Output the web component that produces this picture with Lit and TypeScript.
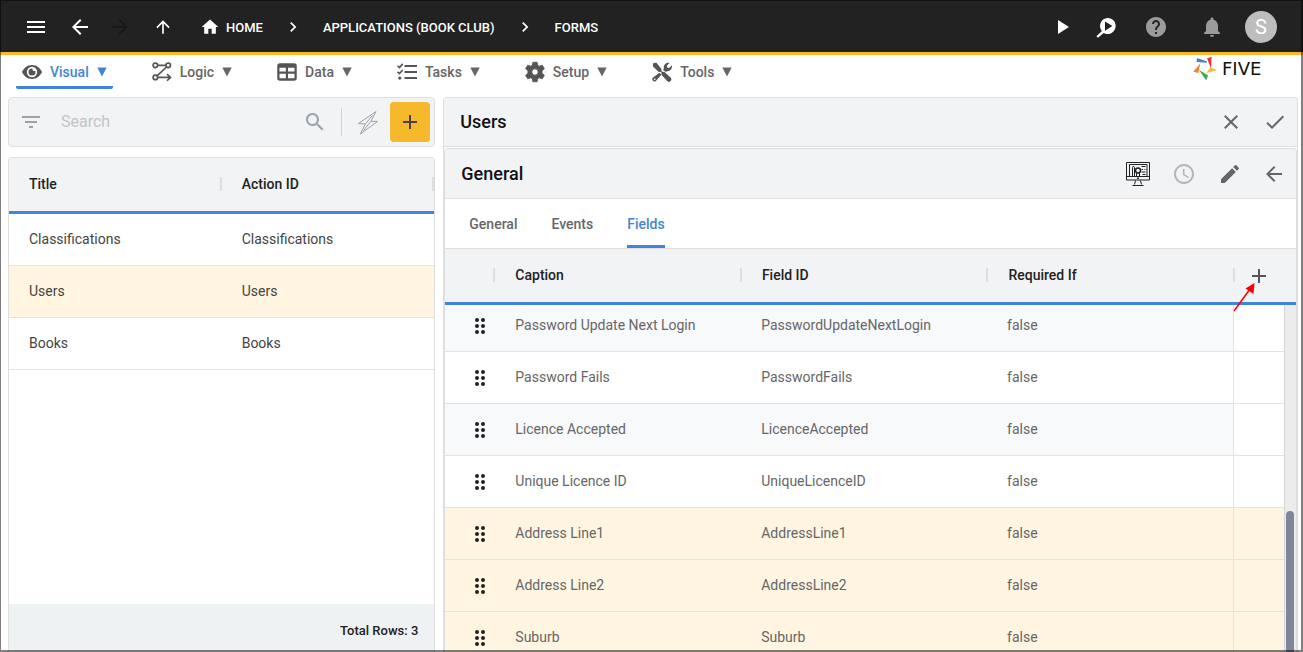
import { LitElement, html, css, svg } from "lit";
import { customElement, property, state } from "lit/decorators.js";
import { classMap } from "lit/directives/class-map.js";

const icons = {
  menu: svg`<path d="M3 18h18v-2H3v2zm0-5h18v-2H3v2zm0-7v2h18V6H3z"/>`,
  back: svg`<path d="M20 11H7.83l5.59-5.59L12 4l-8 8 8 8 1.41-1.41L7.83 13H20v-2z"/>`,
  forward: svg`<path d="M12 4l-1.41 1.41L16.17 11H4v2h12.17l-5.58 5.59L12 20l8-8z"/>`,
  up: svg`<path d="M4 12l1.41 1.41L11 7.83V20h2V7.83l5.58 5.59L20 12l-8-8-8 8z"/>`,
  home: svg`<path d="M10 20v-6h4v6h5v-8h3L12 3 2 12h3v8z"/>`,
  chevron: svg`<path d="M10 6 8.59 7.41 13.17 12l-4.58 4.59L10 18l6-6z"/>`,
  play: svg`<path d="M8 5v14l11-7z"/>`,
  inspect: svg`<path fill-rule="evenodd" d="M13.600 3a8 8 0 1 1-4 14.900L4 22.800l-1.600-1.600 5.500-5.100A8 8 0 0 1 13.600 3zM11 6.400v9.400l7.400-4.700z"/>`,
  help: svg`<path d="M12 2C6.48 2 2 6.48 2 12s4.48 10 10 10 10-4.48 10-10S17.52 2 12 2zm1 17h-2v-2h2v2zm2.07-7.75-.9.92C13.45 12.9 13 13.5 13 15h-2v-.5c0-1.1.45-2.1 1.17-2.83l1.24-1.26c.37-.36.59-.86.59-1.41 0-1.1-.9-2-2-2s-2 .9-2 2H8c0-2.21 1.79-4 4-4s4 1.79 4 4c0 .88-.36 1.68-.93 2.25z"/>`,
  bell: svg`<path d="M12 22c1.1 0 2-.9 2-2h-4c0 1.1.89 2 2 2zm6-6v-5c0-3.07-1.64-5.64-4.5-6.32V4c0-.83-.67-1.5-1.5-1.5s-1.5.67-1.5 1.5v.68C7.63 5.36 6 7.92 6 11v5l-2 2v1h16v-1l-2-2z"/>`,
  eye: svg`<path fill-rule="evenodd" d="M12 3.600C6.600 3.600 2.200 7 0 12c2.200 5 6.600 8.400 12 8.400S21.800 17 24 12C21.800 7 17.400 3.600 12 3.600zM12 18.200A6.200 6.200 0 1 1 12 5.800a6.200 6.200 0 0 1 0 12.400z"/><path d="M12 7.800a4.200 4.200 0 1 0 4.200 4.200c0-.6-.1-1.100-.3-1.600a2.100 2.100 0 0 1-3.400-1.300c0-.4.100-.8.300-1.200z"/>`,
  logic: svg`<g fill="none" stroke="currentColor" stroke-width="2"><circle cx="4" cy="4" r="2.700"/><circle cx="19.500" cy="4" r="2.700"/><circle cx="4" cy="18.500" r="2.700"/><path d="M6.700 4h10.100M17.500 6 6 16.700M6.700 18.500H22M18 14.500 22.200 18.500 18 22.500"/></g>`,
  data: svg`<path fill-rule="evenodd" d="M3.500 1.500h17A3.200 3.200 0 0 1 23.700 4.700v14.600a3.200 3.200 0 0 1-3.200 3.200h-17A3.200 3.200 0 0 1 .300 19.300V4.700A3.200 3.200 0 0 1 3.500 1.500zM3 7v4.500h7.600V7zM13.200 7v4.500H21V7zM3 14.200v5.200h7.600v-5.200zM13.200 14.200v5.200H21v-5.200z"/>`,
  tasks: svg`<path d="M9 3.500h15V6H9zM9 10.700h15v2.500H9zM9 18h15v2.500H9z"/><circle cx="3.300" cy="19.300" r="2"/><path d="m.700 4.500 2.200 2.200 4-4.400M.700 11.800 2.900 14l4-4.400" fill="none" stroke="currentColor" stroke-width="2"/>`,
  gear: svg`<path fill-rule="evenodd" d="M9.500.300h5l.7 3.600 2 1.100 3.500-1.200 2.600 4.200-2.800 2.400v3.200l2.800 2.400-2.600 4.200-3.500-1.200-2 1.100-.7 3.600h-5l-.7-3.600-2-1.100-3.500 1.200L.7 16l2.800-2.400v-3.200L.7 8l2.600-4.200L6.800 5l2-1.100zM12 8.200a3.800 3.800 0 1 0 0 7.600 3.800 3.800 0 0 0 0-7.600z" stroke="currentColor" stroke-width="1" stroke-linejoin="round"/>`,
  tools: svg`<path fill-rule="evenodd" d="M1.500 1.200 5.300 1l6.200 7.500-.3 2 1.500 1.500 2-.3 8 7.300a3 3 0 0 1-4.200 4.200l-7.200-7.800.3-2.200-1.500-1.500-2.100.2L1 5z"/><path fill-rule="evenodd" d="M21 1.200 17.800 4.500l.5 2.200 2.200.5 3.200-3.200c1 3.600-1.500 7.500-5.700 7.200L16.600 12l-3.200-2.400.8-1.800C13.500 3.500 17 .1 21 1.200zM9 13l2.200 2.200-6.500 7.500a2.700 2.700 0 0 1-3.800-3.800zM3.300 19.800a1 1 0 1 0 0 2 1 1 0 0 0 0-2z"/>`,
  filter: svg`<path d="M10 18h4v-2h-4v2zM3 6v2h18V6H3zm3 7h12v-2H6v2z"/>`,
  search: svg`<path d="M15.500 14h-.79l-.28-.27C15.410 12.590 16 11.110 16 9.500 16 5.910 13.090 3 9.500 3S3 5.910 3 9.500 5.910 16 9.500 16c1.610 0 3.090-.59 4.230-1.570l.27.28v.79l5 4.990L20.490 19l-4.990-5zm-6 0C7.010 14 5 11.990 5 9.500S7.010 5 9.500 5 14 7.010 14 9.500 11.990 14 9.500 14z"/>`,
  bolt: svg`<path d="M20 1.500 2.500 13.500l6.800.5-5 10L21.500 11.500l-6.500-.3zM16.500 5.500 9.300 14M15 11.200 7.500 20.500" fill="none" stroke="currentColor" stroke-width="1"/>`,
  plus: svg`<path d="M19 13h-6v6h-2v-6H5v-2h6V5h2v6h6v2z"/>`,
  close: svg`<path d="M19 6.410 17.590 5 12 10.590 6.410 5 5 6.410 10.590 12 5 17.590 6.410 19 12 13.410 17.590 19 19 17.590 13.410 12z"/>`,
  check: svg`<path d="M9 16.170 4.830 12l-1.420 1.410L9 19 21 7l-1.410-1.410z"/>`,
  clock: svg`<path d="M11.990 2C6.470 2 2 6.480 2 12s4.470 10 9.990 10C17.520 22 22 17.520 22 12S17.520 2 11.990 2zM12 20c-4.420 0-8-3.580-8-8s3.580-8 8-8 8 3.580 8 8-3.580 8-8 8zm.5-13H11v6l5.250 3.150.75-1.230-4.500-2.670z"/>`,
  pencil: svg`<path d="M3 17.250V21h3.750L17.810 9.940l-3.750-3.750L3 17.250zM20.710 7.040c.39-.39.39-1.020 0-1.410l-2.340-2.340a.996.996 0 0 0-1.410 0l-1.830 1.830 3.750 3.750 1.830-1.830z"/>`,
  monitor: svg`<g fill="none" stroke="currentColor"><path d="M.5.500h23v17.500H.5zM.5 14.500h23M3.500 2.500h17.500v12H3.500zM9.500 18.500l-1 4M14.500 18.500l1 4M6.500 23.500h11" stroke-width="1"/><path d="M6.500 14V5.500L7.500 4l1 1.500V14M10.500 14v-3M13.500 14v-3M15.500 4.500h4M15.500 7.500h1.500M18.500 7.500h1M15.500 10h4M16.500 12.500h3" stroke-width="1"/><circle cx="12" cy="8.500" r="2.500" stroke-width="1.500"/></g><circle cx="12" cy="16.300" r="1"/>`,
  drag: svg`<circle cx="9" cy="6" r="2"/><circle cx="15" cy="6" r="2"/><circle cx="9" cy="12" r="2"/><circle cx="15" cy="12" r="2"/><circle cx="9" cy="18" r="2"/><circle cx="15" cy="18" r="2"/>`,
};

type IconName = keyof typeof icons;

@customElement("ui-icon")
class UiIcon extends LitElement {
  @property() name: IconName = "menu";

  static styles = css`
    :host { display: inline-flex; width: 24px; height: 24px; flex: none; }
    svg { width: 100%; height: 100%; fill: currentColor; overflow: visible; }
  `;

  render() {
    return html`<svg viewBox="0 0 24 24" aria-hidden="true">${icons[this.name]}</svg>`;
  }
}

const base = css`
  * { box-sizing: border-box; }
  button { font: inherit; color: inherit; background: none; border: 0; padding: 0; margin: 0; cursor: pointer; display: inline-flex; align-items: center; justify-content: center; }
  a { color: inherit; text-decoration: none; }
`;

@customElement("app-header")
class AppHeader extends LitElement {
  static styles = [base, css`
    :host { display: flex; align-items: center; height: 55px; padding: 2px 26px 0 14px; background: #222; border-bottom: 3px solid #fbb829; color: #fff; }
    .nav { width: 44px; height: 44px; }
    .nav.off { color: #181818; width: 36px; }
    .nav.up { width: 50px; }
    .small { width: 20px; height: 20px; }
    .crumbs { display: flex; align-items: center; margin: 0 0 0 12px; padding: 0; list-style: none; font-size: 13px; line-height: 20px; font-weight: 500; }
    .crumbs li, .crumbs a { display: flex; align-items: center; }
    .crumbs a { gap: 6px; }
    .crumbs span { padding-top: 1px; }
    .sep { width: 20px; height: 20px; margin: 0 20px; }
    .right { display: flex; align-items: center; margin-left: auto; }
    .right button { width: 44px; height: 44px; }
    .right .help { width: 56px; color: #9b9b9b; }
    .right .bell { width: 56px; color: #9b9b9b; }
    .avatar { width: 32px; height: 32px; margin-left: 5px; border-radius: 50%; background: #bdbdbd; display: grid; place-items: center; font-size: 20px; line-height: 32px; }
  `];

  render() {
    return html`
      <button class="nav" aria-label="Menu"><ui-icon name="menu"></ui-icon></button>
      <button class="nav" aria-label="Back"><ui-icon name="back"></ui-icon></button>
      <button class="nav off" aria-label="Forward" disabled><ui-icon name="forward"></ui-icon></button>
      <button class="nav up" aria-label="Up"><ui-icon class="small" name="up"></ui-icon></button>
      <ol class="crumbs">
        <li><a href="#home"><ui-icon class="small" name="home"></ui-icon><span>HOME</span></a></li>
        <li><ui-icon class="sep" name="chevron"></ui-icon><a href="#applications"><span>APPLICATIONS (BOOK CLUB)</span></a></li>
        <li><ui-icon class="sep" name="chevron"></ui-icon><a href="#forms"><span>FORMS</span></a></li>
      </ol>
      <div class="right">
        <button aria-label="Run"><ui-icon name="play"></ui-icon></button>
        <button aria-label="Inspect"><ui-icon name="inspect"></ui-icon></button>
        <button class="help" aria-label="Help"><ui-icon name="help"></ui-icon></button>
        <button class="bell" aria-label="Notifications"><ui-icon name="bell"></ui-icon></button>
        <span class="avatar">S</span>
      </div>
    `;
  }
}

const sections: { label: string; icon: IconName }[] = [
  { label: "Visual", icon: "eye" },
  { label: "Logic", icon: "logic" },
  { label: "Data", icon: "data" },
  { label: "Tasks", icon: "tasks" },
  { label: "Setup", icon: "gear" },
  { label: "Tools", icon: "tools" },
];

@customElement("section-menu")
class SectionMenu extends LitElement {
  @state() current = "Visual";

  static styles = [base, css`
    :host { display: flex; align-items: flex-start; height: 42px; padding: 0 22px 0 16px; background: #fff; }
    nav { display: flex; gap: 33px; }
    .item { height: 34px; padding: 2px 6px 0; gap: 8px; border-bottom: 3px solid transparent; border-radius: 2px; color: #666; font-size: 14px; line-height: 20px; font-weight: 500; }
    .item.active { color: #4285d8; border-color: #4285d8; }
    .icon { width: 20px; height: 20px; color: #555; }
    .caret { width: 10px; height: 10px; fill: currentColor; }
    .brand { display: flex; align-items: center; gap: 5px; margin-left: auto; height: 28px; color: #111; }
    .brand svg { width: 24px; height: 24px; }
    .brand span { width: 59px; font: 18px/24px "DejaVu Sans", sans-serif; }
  `];

  render() {
    return html`
      <nav>
        ${sections.map(s => html`
          <button class=${classMap({ item: true, active: s.label === this.current })} @click=${() => (this.current = s.label)}>
            <ui-icon class="icon" name=${s.icon}></ui-icon>
            <span>${s.label}</span>
            <svg class="caret" viewBox="0 0 10 10"><path d="M.300.500h9.400L5 9.500z"/></svg>
          </button>`)}
      </nav>
      <a class="brand" href="#five" aria-label="Five">
        <svg viewBox="0 0 24 24">
          <path d="M4 1 13.800 4.300v1.500L3.500 5z" fill="#4285d8"/>
          <path d="M14 1.200 18.700 0 18 11.500z" fill="#e5393b"/>
          <path d="M7.300 6.200 5.300 16 .300 14.700z" fill="#f58233"/>
          <path d="M6 13 15 18.300 13.300 23.500z" fill="#3fa757"/>
          <path d="M13.500 16 17.500 10.500 24 13.300z" fill="#fbb829"/>
        </svg>
        <span>FIVE</span>
      </a>
    `;
  }
}

const tableStyles = css`
  table { display: block; font-size: 14px; line-height: 20px; }
  thead, tbody { display: block; }
  tr { display: grid; }
  th, td { padding: 0 0 2px 20px; text-align: left; display: flex; align-items: center; min-width: 0; }
  thead tr { height: 56px; background: #f1f3f5; border-bottom: 3px solid #4285d8; }
  th { font-weight: 500; color: #222; border-right: 2px solid #dcdee0; border-image: linear-gradient(transparent 19px, #dcdee0 19px, #dcdee0 33px, transparent 33px) 0 2 0 0; }
  tbody tr { height: 52px; border-bottom: 1px solid #e3e3e3; }
`;

@customElement("record-list")
class RecordList extends LitElement {
  @property({ attribute: false }) rows = ["Classifications", "Users", "Books"];
  @state() selected = "Users";

  static styles = [base, tableStyles, css`
    :host { display: flex; flex-direction: column; gap: 10px; min-height: 0; }
    .search { display: flex; align-items: center; height: 50px; padding: 0 4px 0 10px; border: 1px solid #dedede; border-radius: 4px; background: #f1f3f5; color: #9aa2aa; }
    input { flex: 1; min-width: 0; margin-left: 18px; padding: 0; border: 0; outline: 0; background: none; font: 16px/24px Roboto, sans-serif; color: #222; }
    input::placeholder { color: #c2c5c8; opacity: 1; }
    .bar { width: 1px; height: 28px; margin-left: 14px; background: #d0d3d6; }
    .bolt { width: 48px; height: 40px; padding-left: 4px; }
    .add { width: 40px; height: 40px; border-radius: 4px; background: #f8b82c; color: #444; }
    .panel { flex: 1; min-height: 0; display: flex; flex-direction: column; border: 1px solid #dedede; border-bottom: 0; border-radius: 4px 4px 0 0; overflow: hidden; background: #fff; }
    tr { grid-template-columns: 1fr 1fr; }
    td { color: #444; }
    tr.selected { background: #fff5e1; }
    footer { margin-top: auto; height: 48px; padding: 17px 16px 0; background: #eef2f3; text-align: right; font-size: 13px; line-height: 20px; font-weight: 500; color: #222; }
  `];

  render() {
    return html`
      <form class="search" role="search" @submit=${(e: Event) => e.preventDefault()}>
        <button type="button" aria-label="Filter"><ui-icon name="filter"></ui-icon></button>
        <input type="text" placeholder="Search" aria-label="Search">
        <button aria-label="Search"><ui-icon name="search"></ui-icon></button>
        <span class="bar"></span>
        <button type="button" class="bolt" aria-label="Quick action"><ui-icon name="bolt"></ui-icon></button>
        <button type="button" class="add" aria-label="Add"><ui-icon name="plus"></ui-icon></button>
      </form>
      <div class="panel">
        <table>
          <thead><tr><th>Title</th><th>Action ID</th></tr></thead>
          <tbody>
            ${this.rows.map(r => html`
              <tr class=${classMap({ selected: r === this.selected })} @click=${() => (this.selected = r)}><td>${r}</td><td>${r}</td></tr>`)}
          </tbody>
        </table>
        <footer>Total Rows: ${this.rows.length}</footer>
      </div>
    `;
  }
}

const fields: { caption: string; id: string; fresh?: boolean }[] = [
  { caption: "Password Update Next Login", id: "PasswordUpdateNextLogin" },
  { caption: "Password Fails", id: "PasswordFails" },
  { caption: "Licence Accepted", id: "LicenceAccepted" },
  { caption: "Unique Licence ID", id: "UniqueLicenceID" },
  { caption: "Address Line1", id: "AddressLine1", fresh: true },
  { caption: "Address Line2", id: "AddressLine2", fresh: true },
  { caption: "Suburb", id: "Suburb", fresh: true },
];

@customElement("form-editor")
class FormEditor extends LitElement {
  @state() tab = "Fields";

  static styles = [base, tableStyles, css`
    :host { display: flex; flex-direction: column; min-height: 0; border: 1px solid #dedede; border-bottom: 0; border-radius: 4px 4px 0 0; overflow: hidden; background: #fff; }
    .bar { display: flex; align-items: center; flex: none; height: 49px; background: #f1f3f5; border-bottom: 1px solid #dedede; color: #666; }
    .bar h1, .bar h2 { flex: 1; margin: 0; padding-left: 16px; font-size: 18px; line-height: 24px; font-weight: 500; color: #111; }
    .bar button { width: 44px; height: 44px; }
    .bar.inner { height: 50px; padding-right: 1px; }
    .bar.inner button { width: 46px; }
    .bar.inner button:last-child { width: 42px; }
    .bar .dark { color: #222; }
    .bar .faint { color: #b5b5b5; }
    .sheet { flex: 1; min-height: 0; display: flex; flex-direction: column; margin-top: 1px; border: 1px solid #dedede; border-bottom: 0; border-radius: 4px 4px 0 0; overflow: hidden; }
    .tabs { display: flex; flex: none; gap: 34px; height: 50px; padding: 0 24px; border-bottom: 1px solid #dedede; }
    .tabs button { padding-top: 3px; border-bottom: 3px solid transparent; border-radius: 2px 2px 0 0; font-size: 14px; line-height: 20px; font-weight: 500; color: #666; }
    .tabs .active { color: #4285d8; border-color: #4285d8; }
    .grid { position: relative; flex: 1; min-height: 0; display: flex; flex-direction: column; }
    table { flex: 1; min-height: 0; display: flex; flex-direction: column; }
    thead tr { grid-template-columns: 50px 1fr 1fr 1fr 61px; }
    tbody tr { grid-template-columns: 50px 1fr 1fr 1fr 51px; }
    thead { position: relative; flex: none; z-index: 1; }
    tbody { flex: 1; min-height: 0; margin: -5px 12px 0 0; overflow: hidden; }
    td { color: #666; }
    th:first-child { padding: 0; }
    td:first-child { padding: 0 0 0 20px; justify-content: center; color: #222; }
    th:last-child { position: relative; padding: 0 0 0 12px; border: 0; border-image: none; color: #555; }
    td:last-child { padding: 0; border-left: 1px solid #e3e3e3; }
    tbody tr:nth-child(odd) td:not(:last-child) { background: #f8f9fb; }
    tbody tr.fresh td:nth-child(n) { background: #fff5e1; }
    .arrow { position: absolute; left: -2px; top: 31px; width: 24px; height: 32px; pointer-events: none; }
    .rail { position: absolute; top: 56px; right: 0; bottom: 0; width: 12px; border-left: 1px solid #d5d5d5; background: #ececec; }
    .thumb { position: absolute; top: 206px; bottom: -8px; left: 1px; width: 8px; border-radius: 4px; background: #80869a; }
  `];

  render() {
    return html`
      <div class="bar">
        <h1>Users</h1>
        <button aria-label="Close"><ui-icon name="close"></ui-icon></button>
        <button aria-label="Save"><ui-icon name="check"></ui-icon></button>
      </div>
      <section class="sheet">
        <div class="bar inner">
          <h2>General</h2>
          <button class="dark" aria-label="Preview"><ui-icon name="monitor"></ui-icon></button>
          <button class="faint" aria-label="History"><ui-icon name="clock"></ui-icon></button>
          <button aria-label="Edit"><ui-icon name="pencil"></ui-icon></button>
          <button aria-label="Back"><ui-icon name="back"></ui-icon></button>
        </div>
        <div class="tabs" role="tablist">
          ${["General", "Events", "Fields"].map(t => html`
            <button role="tab" aria-selected=${t === this.tab} class=${classMap({ active: t === this.tab })} @click=${() => (this.tab = t)}>${t}</button>`)}
        </div>
        <div class="grid">
          <table>
            <thead>
              <tr>
                <th></th><th>Caption</th><th>Field ID</th><th>Required If</th>
                <th>
                  <button aria-label="Add field"><ui-icon name="plus"></ui-icon></button>
                  <svg class="arrow" viewBox="0 0 24 32"><path d="M1 31 17 9" stroke="#f00" stroke-width="1.500"/><path d="M21.500 3 20.500 14 12.500 8.500z" fill="#f00"/></svg>
                </th>
              </tr>
            </thead>
            <tbody>
              ${fields.map(f => html`
                <tr class=${classMap({ fresh: !!f.fresh })}>
                  <td><ui-icon name="drag"></ui-icon></td>
                  <td>${f.caption}</td><td>${f.id}</td><td>false</td><td></td>
                </tr>`)}
            </tbody>
          </table>
          <div class="rail"><div class="thumb"></div></div>
        </div>
      </section>
    `;
  }
}

@customElement("app-root")
class AppRoot extends LitElement {
  static styles = css`
    :host { position: relative; display: flex; flex-direction: column; height: 100vh; overflow: hidden; background: #fff; font-family: Roboto, sans-serif; }
    app-header, section-menu { flex: none; box-sizing: border-box; }
    main { flex: 1; min-height: 0; display: grid; grid-template-columns: 1fr 2fr; grid-template-rows: minmax(0, 1fr); gap: 8px; padding: 0 5px 0 8px; }
    .frame { position: absolute; inset: 0; border: solid rgba(0, 0, 0, 0.5); border-width: 1px 2px 2px 1px; pointer-events: none; z-index: 5; }
  `;

  render() {
    return html`
      <app-header></app-header>
      <section-menu></section-menu>
      <main>
        <record-list></record-list>
        <form-editor></form-editor>
      </main>
      <div class="frame"></div>
    `;
  }
}
